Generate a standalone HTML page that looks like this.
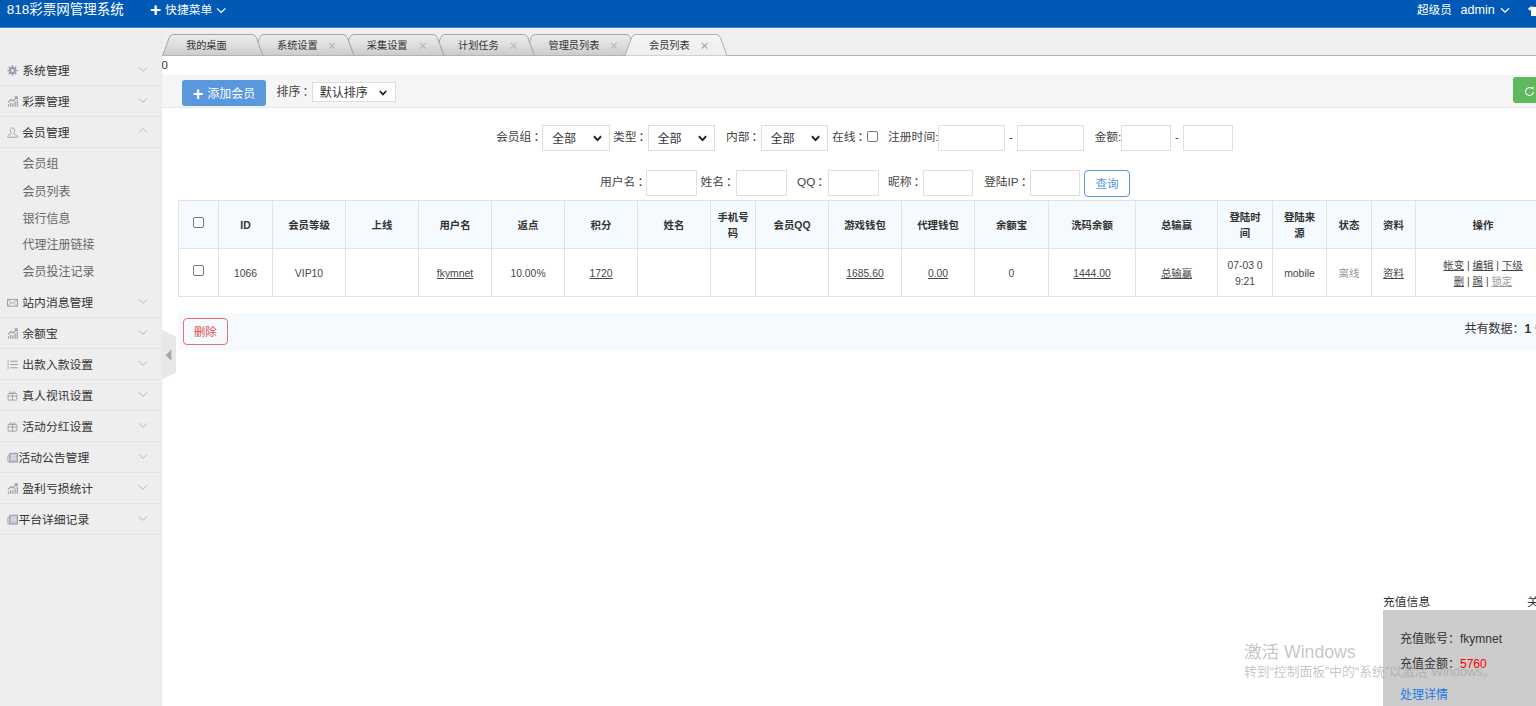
<!DOCTYPE html>
<html lang="zh-CN">
<head>
<meta charset="utf-8">
<title>818彩票网管理系统</title>
<style>
*{box-sizing:border-box;margin:0;padding:0}
html,body{width:1536px;height:706px;overflow:hidden;background:#fff}
body{font-family:"Liberation Sans","Noto Sans CJK SC",sans-serif;font-size:11.2px;color:#333;position:relative}
a{color:#333;text-decoration:underline}
/* header */
#hd{position:absolute;left:0;top:0;width:1536px;height:27px;background:#0059b5;color:#fff}
#hd .logo{position:absolute;left:6.8px;top:0;line-height:20.4px;font-size:13.5px;white-space:nowrap}
#hd .quick{position:absolute;left:150px;top:0;line-height:21.4px;font-size:11.8px;white-space:nowrap}
#hd .quick b{font-size:19px;font-weight:bold;vertical-align:-1.5px;margin-right:4px;line-height:10px}
#hd .user{position:absolute;left:1417px;top:0;line-height:19px;font-size:11.6px;white-space:nowrap}
#hd .user span{font-size:12.6px;margin-left:8.6px}
.chev{display:inline-block;width:10px;height:6.5px;vertical-align:0.5px;margin-left:5px}
/* sidebar */
#side{position:absolute;left:0;top:27px;width:161px;height:679px;background:#eeeeee}
#sideb{position:absolute;left:161px;top:29px;width:1px;height:677px;background:#e9e9e9;z-index:4}
#side dl{position:absolute;left:0;top:28px;width:161px}
#side dt{position:relative;height:31px;line-height:32px;overflow:hidden;border-bottom:1px solid #e5e5e5;padding-left:22.3px;font-size:11.8px;color:#333;white-space:nowrap}
#side dt i{position:absolute;left:7px;top:10px;width:11px;height:11px}
#side dt i svg{display:block;width:11px;height:11px}
#side dt.nw{padding-left:18.4px}
#side dt svg.ar{position:absolute;left:138.2px;top:11.4px;width:10px;height:7px}
#side dd a:first-child{line-height:26.6px}
#side dd{padding:3px 0 2px 0;height:139px}
#side dd a{display:block;height:26.8px;line-height:28px;overflow:hidden;padding-left:22.6px;font-size:12px;color:#666;text-decoration:none}
/* tabs */
#tabs{position:absolute;left:161px;top:27px;width:1375px;height:29px;background:#efeef0}
#tabs svg{position:absolute;left:0;top:0}
#main{position:absolute;left:161px;top:56px;width:1375px;height:650px;background:#fff}
.zero{position:absolute;left:0.4px;top:2px;font-size:11.4px;line-height:14px;color:#333}
.bar{position:absolute;left:0;top:18px;width:1375px;height:34px;background:#f5f5f5;border-top:1px solid #fbfbfb;border-bottom:1px solid #e8e8e8}
.btn-add{position:absolute;left:21px;top:5px;width:84px;height:26px;background:#5a98de;border-radius:3px;color:#fff;font-size:12px;line-height:28.6px;text-align:center;white-space:nowrap;overflow:hidden}
.btn-add b{font-size:18px;vertical-align:-1.5px;margin-right:4px;line-height:10px}
.lbl{position:absolute;white-space:nowrap;font-size:11.8px;line-height:16px;color:#444}
.sel{position:absolute;height:19.6px;border:1px solid #ddd;background:#fff;font-size:12px;line-height:20px;padding-left:6.5px;color:#333;white-space:nowrap}
.sel svg{position:absolute;right:8px;top:6.5px;width:8px;height:6px}
.co{position:relative;left:2px}
.sel2{position:absolute;height:26px;border:1px solid #ddd;background:#fff;font-size:12px;line-height:26.4px;padding-left:8.6px;overflow:hidden;color:#333;white-space:nowrap}
.sel2 svg{position:absolute;right:7px;top:9px;width:9px;height:7px}
.inp{position:absolute;height:26px;border:1px solid #e0e0e0;background:#fff}
.cb{position:absolute;width:11px;height:11px;border:1px solid #767676;border-radius:2px;background:#fff}
.btn-ref{position:absolute;left:1352.2px;top:1.6px;width:40px;height:26.4px;background:#5eb95e;border-radius:3px}
.btn-q{position:absolute;left:923px;top:114px;width:46px;height:27px;border:1px solid #5a98de;border-radius:4px;color:#5a98de;font-size:11.6px;line-height:26px;text-align:center;background:#fff}
table{position:absolute;left:17px;top:144px;border-collapse:collapse;table-layout:fixed;width:1373px}
th,td{border:1px solid #e3e3e3;text-align:center;vertical-align:middle;font-size:10.4px;line-height:16.6px;color:#333;padding:3.6px 6px 0 6px;overflow:hidden}
th{background:#f5fafe;font-weight:bold;height:48px}
td{height:48px;color:#484848}
td a{color:#484848}
.cbx{display:inline-block;width:11px;height:11px;border:1px solid #767676;border-radius:2px;background:#fff;vertical-align:middle;position:relative;top:-4px}
.foot{position:absolute;left:17px;top:257px;width:1400px;height:36.6px;background:#f5fafe}
.btn-del{position:absolute;left:4.8px;top:5.4px;width:45px;height:26.2px;border:1px solid #e1716d;border-radius:4px;color:#dd514c;font-size:11.6px;line-height:25px;text-align:center;background:transparent}
.total{position:absolute;left:1286.5px;top:5.6px;font-size:12px;line-height:20px;white-space:nowrap;color:#333}
.handle{position:absolute;left:161px;top:330px;width:14px;height:50px}
/* popup */
#pop{position:absolute;left:1383px;top:593px;width:170px;height:120px}
#pop .t{position:absolute;left:0;top:0.8px;font-size:11.8px;line-height:17px;color:#333;white-space:nowrap}
#pop .x{position:absolute;left:144px;top:0.8px;font-size:11.8px;line-height:17px;color:#333}
#pop .b{position:absolute;left:0;top:17px;width:170px;height:110px;background:#cccccc}
#pop .b p{position:absolute;left:17px;font-size:12px;line-height:16px;white-space:nowrap;color:#333}
#wm{position:absolute;left:1244px;top:639.5px;color:rgba(150,150,150,.55);white-space:nowrap;z-index:5}
#wm .a{font-size:17.6px;line-height:24px}
#wm .c{font-size:12.8px;line-height:17px;margin-top:-0.5px}
</style>
</head>
<body>
<div id="hd">
  <div class="logo">818彩票网管理系统</div>
  <div class="quick"><b>+</b>快捷菜单<svg class="chev" style="margin-left:3.2px;width:10.4px;height:6.8px;vertical-align:0.4px" viewBox="0 0 10 6"><path d="M1 1 L5 5 L9 1" fill="none" stroke="#fff" stroke-width="1.2"/></svg></div>
  <div class="user">超级员<span>admin</span><svg class="chev" viewBox="0 0 10 6"><path d="M1 1 L5 5 L9 1" fill="none" stroke="#fff" stroke-width="1.2"/></svg></div>
<svg style="position:absolute;left:1527.8px;top:6px;width:14px;height:10.4px" viewBox="0 0 14 10.4"><path d="M3.8 0.2L0 2.3L1.3 4.6L3 3.7V10.2H11V3.7L12.7 4.6L14 2.3L10.2 0.2Q7 2 3.8 0.2Z" fill="#fff"/></svg>
</div>
<div style="position:absolute;left:0;top:27px;width:1536px;height:1px;background:#3f7fc5;z-index:3"></div><div style="position:absolute;left:0;top:28px;width:1536px;height:1px;background:#f6f3f2;z-index:3"></div>

<div id="side">
<dl>
  <dt><i><svg viewBox="0 0 12 12"><g stroke="#999eaa" stroke-width="1.9"><path d="M6 0.4V11.6M0.4 6H11.6M2 2L10 10M2 10L10 2"/></g><circle cx="6" cy="6" r="3.7" fill="#999eaa"/><circle cx="6" cy="6" r="1.5" fill="#eee"/></svg></i>系统管理<svg class="ar" viewBox="0 0 10 7"><path d="M0.8 1.2L5 5.4L9.2 1.2" fill="none" stroke="#b3b4b8" stroke-width="1"/></svg></dt>
  <dt><i><svg viewBox="0 0 12 12"><g fill="none" stroke="#999eaa" stroke-width="1.3"><path d="M1.6 11.6V9M4 11.6V7.4M6.4 11.6V8M8.8 11.6V5.6M11.2 11.6V4.6"/><path d="M1 7L4.5 3.8L6.5 5.5L10.8 1.2M8.2 1H11V3.8"/></g></svg></i>彩票管理<svg class="ar" viewBox="0 0 10 7"><path d="M0.8 1.2L5 5.4L9.2 1.2" fill="none" stroke="#b3b4b8" stroke-width="1"/></svg></dt>
  <dt><i><svg viewBox="0 0 12 12"><path d="M6 1C4.3 1 3.6 2.3 3.6 3.8C3.6 5.2 4.2 6.2 4.8 6.8C4.8 7.6 3.6 8 2.2 8.6C1 9.1 0.8 9.8 0.8 11.2H11.2C11.2 9.8 11 9.1 9.8 8.6C8.4 8 7.2 7.6 7.2 6.8C7.8 6.2 8.4 5.2 8.4 3.8C8.4 2.3 7.7 1 6 1Z" fill="none" stroke="#999eaa" stroke-width="1"/></svg></i>会员管理<svg class="ar" viewBox="0 0 10 7"><path d="M0.8 4.7L5 0.5L9.2 4.7" fill="none" stroke="#b3b4b8" stroke-width="1"/></svg></dt>
  <dd><a>会员组</a><a>会员列表</a><a>银行信息</a><a>代理注册链接</a><a>会员投注记录</a></dd>
  <dt><i><svg viewBox="0 0 12 12"><rect x="0.6" y="2.6" width="10.8" height="7.4" fill="none" stroke="#999eaa" stroke-width="1.1"/><path d="M1 3L6 7L11 3M1 9.6L4.6 6M11 9.6L7.4 6" fill="none" stroke="#999eaa" stroke-width="0.9"/></svg></i>站内消息管理<svg class="ar" viewBox="0 0 10 7"><path d="M0.8 1.2L5 5.4L9.2 1.2" fill="none" stroke="#b3b4b8" stroke-width="1"/></svg></dt>
  <dt><i><svg viewBox="0 0 12 12"><g fill="none" stroke="#999eaa" stroke-width="1.3"><path d="M1.6 11.6V9M4 11.6V7.4M6.4 11.6V8M8.8 11.6V5.6M11.2 11.6V4.6"/><path d="M1 7L4.5 3.8L6.5 5.5L10.8 1.2M8.2 1H11V3.8"/></g></svg></i>余额宝<svg class="ar" viewBox="0 0 10 7"><path d="M0.8 1.2L5 5.4L9.2 1.2" fill="none" stroke="#b3b4b8" stroke-width="1"/></svg></dt>
  <dt><i><svg viewBox="0 0 12 12"><g stroke="#999eaa" stroke-width="1.1" fill="none"><path d="M3.6 2.5H11.5M3.6 6H11.5M3.6 9.5H11.5"/><path d="M1.2 0.5V11.5" stroke-dasharray="1.6 0.8"/></g></svg></i>出款入款设置<svg class="ar" viewBox="0 0 10 7"><path d="M0.8 1.2L5 5.4L9.2 1.2" fill="none" stroke="#b3b4b8" stroke-width="1"/></svg></dt>
  <dt><i><svg viewBox="0 0 12 12"><g stroke="#999eaa" stroke-width="1" fill="none"><rect x="1.2" y="3.8" width="9.6" height="7.2" rx="0.8"/><path d="M6 3.8V11M1.2 6.6H10.8M6 3.6C4.5 1.2 2.6 2 3.4 3.4M6 3.6C7.5 1.2 9.4 2 8.6 3.4"/></g></svg></i>真人视讯设置<svg class="ar" viewBox="0 0 10 7"><path d="M0.8 1.2L5 5.4L9.2 1.2" fill="none" stroke="#b3b4b8" stroke-width="1"/></svg></dt>
  <dt><i><svg viewBox="0 0 12 12"><g stroke="#999eaa" stroke-width="1" fill="none"><rect x="1.2" y="3.8" width="9.6" height="7.2" rx="0.8"/><path d="M6 3.8V11M1.2 6.6H10.8M6 3.6C4.5 1.2 2.6 2 3.4 3.4M6 3.6C7.5 1.2 9.4 2 8.6 3.4"/></g></svg></i>活动分红设置<svg class="ar" viewBox="0 0 10 7"><path d="M0.8 1.2L5 5.4L9.2 1.2" fill="none" stroke="#b3b4b8" stroke-width="1"/></svg></dt>
  <dt class="nw"><i><svg viewBox="0 0 12 12"><g stroke="#999eaa" fill="none"><rect x="3" y="1.4" width="8.4" height="9.6" stroke-width="1.1" fill="#bfc3cc"/><path d="M3 4H1V10.2C1 10.7 1.4 11 1.9 11H3" stroke-width="1"/><path d="M4.6 3.6H9.8M4.6 5.6H9.8M4.6 7.6H9.8" stroke="#eee" stroke-width="0.9"/></g></svg></i>活动公告管理<svg class="ar" viewBox="0 0 10 7"><path d="M0.8 1.2L5 5.4L9.2 1.2" fill="none" stroke="#b3b4b8" stroke-width="1"/></svg></dt>
  <dt><i><svg viewBox="0 0 12 12"><g fill="none" stroke="#999eaa" stroke-width="1.3"><path d="M1.6 11.6V9M4 11.6V7.4M6.4 11.6V8M8.8 11.6V5.6M11.2 11.6V4.6"/><path d="M1 7L4.5 3.8L6.5 5.5L10.8 1.2M8.2 1H11V3.8"/></g></svg></i>盈利亏损统计<svg class="ar" viewBox="0 0 10 7"><path d="M0.8 1.2L5 5.4L9.2 1.2" fill="none" stroke="#b3b4b8" stroke-width="1"/></svg></dt>
  <dt class="nw"><i><svg viewBox="0 0 12 12"><g stroke="#999eaa" fill="none"><rect x="3" y="1.4" width="8.4" height="9.6" stroke-width="1.1" fill="#bfc3cc"/><path d="M3 4H1V10.2C1 10.7 1.4 11 1.9 11H3" stroke-width="1"/><path d="M4.6 3.6H9.8M4.6 5.6H9.8M4.6 7.6H9.8" stroke="#eee" stroke-width="0.9"/></g></svg></i>平台详细记录<svg class="ar" viewBox="0 0 10 7"><path d="M0.8 1.2L5 5.4L9.2 1.2" fill="none" stroke="#b3b4b8" stroke-width="1"/></svg></dt>
</dl>
</div>

<div id="sideb"></div>
<div id="tabs"><svg width="1375" height="29" viewBox="0 0 1375 29"><defs><linearGradient id="gi" x1="0" y1="0" x2="0" y2="1"><stop offset="0" stop-color="#ececec"/><stop offset="0.5" stop-color="#dedede"/><stop offset="1" stop-color="#cbcbcb"/></linearGradient><linearGradient id="ga" x1="0" y1="0" x2="0" y2="1"><stop offset="0" stop-color="#f6f6f6"/><stop offset="0.4" stop-color="#f1f1f1"/><stop offset="1" stop-color="#eeeeee"/></linearGradient></defs><path d="M363.5 28.5 L370.1 10.7 Q371.3 7.5 374.5 7.5 L465.0 7.5 Q468.2 7.5 469.4 10.7 L476.0 28.5 Z" fill="url(#gi)" stroke="#9c9c9c" stroke-width="0.9"/><path d="M273.0 28.5 L279.6 10.7 Q280.8 7.5 284.0 7.5 L362.5 7.5 Q365.7 7.5 366.9 10.7 L373.5 28.5 Z" fill="url(#gi)" stroke="#9c9c9c" stroke-width="0.9"/><path d="M182.0 28.5 L188.6 10.7 Q189.8 7.5 193.0 7.5 L272.0 7.5 Q275.2 7.5 276.4 10.7 L283.0 28.5 Z" fill="url(#gi)" stroke="#9c9c9c" stroke-width="0.9"/><path d="M92.0 28.5 L98.6 10.7 Q99.8 7.5 103.0 7.5 L182.0 7.5 Q185.2 7.5 186.4 10.7 L193.0 28.5 Z" fill="url(#gi)" stroke="#9c9c9c" stroke-width="0.9"/><path d="M1.6 28.5 L8.2 10.7 Q9.4 7.5 12.6 7.5 L90.9 7.5 Q94.1 7.5 95.3 10.7 L101.9 28.5 Z" fill="url(#gi)" stroke="#9c9c9c" stroke-width="0.9"/><path d="M0 28.5H1375" stroke="#b4b4b4" stroke-width="1"/><path d="M464.0 28.5 L470.6 10.7 Q471.8 7.5 475.0 7.5 L555.0 7.5 Q558.2 7.5 559.4 10.7 L566.0 28.5" fill="url(#ga)" stroke="#a8a8a8" stroke-width="0.9"/><g font-family="Liberation Sans, Noto Sans CJK SC, sans-serif" font-size="10.2" fill="#333"><text x="25.0" y="22.2">我的桌面</text><text x="116.0" y="22.2">系统设置</text><path d="M168.1 15.8L173.9 21.6M168.1 21.6L173.9 15.8" stroke="#b5b5c0" stroke-width="1.1" fill="none"/><text x="205.8" y="22.2">采集设置</text><path d="M258.9 15.8L264.7 21.6M258.9 21.6L264.7 15.8" stroke="#b5b5c0" stroke-width="1.1" fill="none"/><text x="297.0" y="22.2">计划任务</text><path d="M349.7 15.8L355.5 21.6M349.7 21.6L355.5 15.8" stroke="#b5b5c0" stroke-width="1.1" fill="none"/><text x="387.5" y="22.2">管理员列表</text><path d="M450.1 15.8L455.9 21.6M450.1 21.6L455.9 15.8" stroke="#b5b5c0" stroke-width="1.1" fill="none"/><text x="488.0" y="22.2">会员列表</text><path d="M540.7 15.8L546.5 21.6M540.7 21.6L546.5 15.8" stroke="#a4a4aa" stroke-width="1.1" fill="none"/></g></svg></div>

<div id="main">
  <div class="zero">0</div>
  <div class="bar">
    <div class="btn-add"><b>+</b>添加会员</div>
    <div class="lbl" style="left:115.6px;top:8.9px;font-size:12px">排序<span class="co">：</span></div>
    <div class="sel" style="left:151.2px;top:7.2px;width:83.8px">默认排序<svg viewBox="0 0 8 6"><path d="M0.8 1 L4 4.4 L7.2 1" fill="none" stroke="#222" stroke-width="1.7"/></svg></div>
    <div class="btn-ref"><svg viewBox="0 0 12 12" style="position:absolute;left:11px;top:9.4px;width:11px;height:11px"><path d="M10.2 6.4A4.3 4.3 0 1 1 8.6 2.7" fill="none" stroke="#fff" stroke-width="1.1"/><path d="M7.2 3.4L10.6 3.6L10.2 0.4Z" fill="#fff"/></svg></div>
  </div>
  <!--filters-->
  <div class="lbl" style="left:335px;top:72.8px">会员组<span class="co">：</span></div>
  <div class="sel2" style="left:381.3px;top:69px;width:67.4px">全部<svg viewBox="0 0 8 6"><path d="M0.8 1 L4 4.4 L7.2 1" fill="none" stroke="#222" stroke-width="1.7"/></svg></div>
  <div class="lbl" style="left:452px;top:72.8px">类型<span class="co">：</span></div>
  <div class="sel2" style="left:487px;top:69px;width:67.4px">全部<svg viewBox="0 0 8 6"><path d="M0.8 1 L4 4.4 L7.2 1" fill="none" stroke="#222" stroke-width="1.7"/></svg></div>
  <div class="lbl" style="left:565px;top:72.8px">内部<span class="co">：</span></div>
  <div class="sel2" style="left:600px;top:69px;width:67.4px">全部<svg viewBox="0 0 8 6"><path d="M0.8 1 L4 4.4 L7.2 1" fill="none" stroke="#222" stroke-width="1.7"/></svg></div>
  <div class="lbl" style="left:671px;top:72.8px">在线<span class="co">：</span></div>
  <div class="cb" style="left:706px;top:75px"></div>
  <div class="lbl" style="left:727px;top:72.8px">注册时间:</div>
  <div class="inp" style="left:777px;top:69px;width:67px"></div>
  <div class="lbl" style="left:848px;top:72.8px">-</div>
  <div class="inp" style="left:856px;top:69px;width:67px"></div>
  <div class="lbl" style="left:933.4px;top:72.8px">金额:</div>
  <div class="inp" style="left:960.2px;top:69px;width:50px"></div>
  <div class="lbl" style="left:1014px;top:72.8px">-</div>
  <div class="inp" style="left:1022px;top:69px;width:50px"></div>
  <div class="lbl" style="left:439px;top:117.7px">用户名<span class="co">：</span></div>
  <div class="inp" style="left:485px;top:114px;width:51px"></div>
  <div class="lbl" style="left:539.4px;top:117.7px">姓名<span class="co">：</span></div>
  <div class="inp" style="left:575px;top:114px;width:51px"></div>
  <div class="lbl" style="left:636px;top:117.7px">QQ<span class="co">：</span></div>
  <div class="inp" style="left:666.5px;top:114px;width:51px"></div>
  <div class="lbl" style="left:727px;top:117.7px">昵称<span class="co">：</span></div>
  <div class="inp" style="left:762.3px;top:114px;width:50px"></div>
  <div class="lbl" style="left:823px;top:117.7px">登陆IP<span class="co">：</span></div>
  <div class="inp" style="left:868.5px;top:114px;width:50px"></div>
  <div class="btn-q">查询</div>
  <!--/filters-->
  <table>
    <colgroup><col style="width:40px"><col style="width:54px"><col style="width:73px"><col style="width:73px"><col style="width:73px"><col style="width:73px"><col style="width:73px"><col style="width:73px"><col style="width:45px"><col style="width:73px"><col style="width:73px"><col style="width:73px"><col style="width:74px"><col style="width:87px"><col style="width:82px"><col style="width:55px"><col style="width:54px"><col style="width:45px"><col style="width:44px"><col style="width:135px"></colgroup>
    <tr><th><span class="cbx"></span></th><th>ID</th><th>会员等级</th><th>上线</th><th>用户名</th><th>返点</th><th>积分</th><th>姓名</th><th>手机号码</th><th>会员QQ</th><th>游戏钱包</th><th>代理钱包</th><th>余额宝</th><th>洗码余额</th><th>总输赢</th><th>登陆时<br>间</th><th>登陆来源</th><th>状态</th><th>资料</th><th>操作</th></tr>
    <tr><td><span class="cbx"></span></td><td>1066</td><td>VIP10</td><td></td><td><a>fkymnet</a></td><td>10.00%</td><td><a>1720</a></td><td></td><td></td><td></td><td><a>1685.60</a></td><td><a>0.00</a></td><td>0</td><td><a>1444.00</a></td><td><a>总输赢</a></td><td>07-03 0<br>9:21</td><td>mobile</td><td><span style="color:#999">离线</span></td><td><a>资料</a></td><td><a>帐变</a> | <a>编辑</a> | <a>下级</a><br><a>删</a> | <a>踢</a> | <a style="color:#999">锁定</a></td></tr>
  </table>
  <div class="foot"><div class="btn-del">删除</div><div class="total">共有数据：<b>1</b> 条</div></div>
</div>

<svg class="handle" viewBox="0 0 15.1 51" preserveAspectRatio="none" style="width:15.1px;height:51px;top:329px;left:161.4px"><path d="M0 0L15.1 7.8V43.4L0 51Z" fill="#e8e8e8"/><path d="M4.6 26.2L10.4 20.5V32Z" fill="#aaa"/></svg>
<div id="wm"><div class="a">激活 Windows</div><div class="c">转到“控制面板”中的“系统”以激活 Windows。</div></div>
<div id="pop">
  <div class="t">充值信息</div><div class="x">关闭</div>
  <div class="b">
    <p style="top:20.7px">充值账号：fkymnet</p>
    <p style="top:45.5px">充值金额：<span style="color:#f00">5760</span></p>
    <p style="top:77.2px;color:#2277e5">处理详情</p>
  </div>
</div>
</body>
</html>
